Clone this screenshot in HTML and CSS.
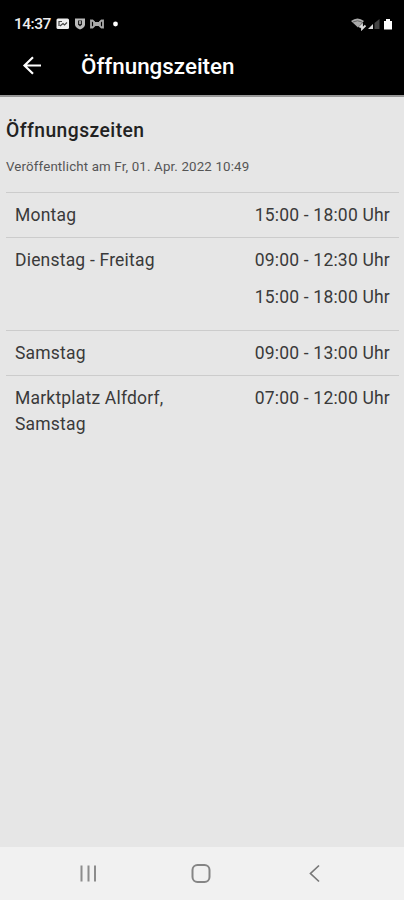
FILE: index.html
```html
<!DOCTYPE html>
<html lang="de">
<head>
    <meta charset="UTF-8">
    <meta name="viewport" content="width=device-width, initial-scale=1.0">
    <title>Öffnungszeiten</title>
    <link rel="stylesheet" href="styles.css">
</head>
<body>

<header>
    <div class="status-bar">
        <span class="clock">14:37</span>
        <svg class="notifications" width="64" height="14" viewBox="0 0 64 14">
            <rect x="1.5" y="1.5" width="12.5" height="10.5" rx="1.5" fill="#eee"/>
            <path d="M4 9V4.500h3M5 9l3-2.500 1.500 1.500 2.500-2.500" fill="none" stroke="#444" stroke-width="1.2"/>
            <path d="M20 1.5h10v6q0 3-5 5-5-2-5-5z" fill="#bbb"/>
            <path d="M23 3.5h4v4l-2 2-2-2z" fill="#222"/>
            <path d="M25 4v3" stroke="#eee" stroke-width="1.2"/>
            <path d="M36 2.5v9M48 2.5v9M37 3l3 3h4l3-3M37 11l3-3h4l3 3M39 4v6M45 4v6" fill="none" stroke="#aaa" stroke-width="1.8"/>
            <circle cx="60.5" cy="7" r="2.4" fill="#fff"/>
        </svg>
        <svg class="signals" width="44" height="14" viewBox="0 0 44 14">
            <path d="M1 4Q7.5-1 14 4L8 10.5z" fill="#aaa"/>
            <path d="M3 5Q7.5 2.5 12 5" fill="none" stroke="#666"/>
            <path d="M9.5 10.5l2.5-2.5v4l3.5-3.5" fill="none" stroke="#ddd" stroke-width="1.8"/>
            <path d="M18 12l5-5v5z" fill="#ddd"/>
            <path d="M24.5 12V6l5-4v10z" fill="#444"/>
            <path d="M34 4h2V2h4v2h2v8.5h-8z" fill="#fff"/>
        </svg>
    </div>
    <div class="toolbar">
        <svg class="back" width="20" height="20" viewBox="0 0 20 20">
            <path d="M19 9.5H2.5M11 1.3L2.5 9.5l8.5 8.2" fill="none" stroke="#fff" stroke-width="2.2"/>
        </svg>
        <h1>Öffnungszeiten</h1>
    </div>
</header>

<main>
    <h2>Öffnungszeiten</h2>
    <p class="published">Veröffentlicht am Fr, 01. Apr. 2022 10:49</p>

    <div class="hours">
        <div class="row">
            <div class="day">Montag</div>
            <div class="times"><p>15:00 - 18:00 Uhr</p></div>
        </div>
        <div class="row split">
            <div class="day">Dienstag - Freitag</div>
            <div class="times">
                <p>09:00 - 12:30 Uhr</p>
                <p>15:00 - 18:00 Uhr</p>
            </div>
        </div>
        <div class="row">
            <div class="day">Samstag</div>
            <div class="times"><p>09:00 - 13:00 Uhr</p></div>
        </div>
        <div class="row">
            <div class="day">Marktplatz Alfdorf, Samstag</div>
            <div class="times"><p>07:00 - 12:00 Uhr</p></div>
        </div>
    </div>
</main>

<nav>
    <svg width="20" height="20" viewBox="0 0 20 20">
        <path d="M3.5 1.5v16M10.5 1.5v16M17 1.5v16" stroke="#8c8c8c" stroke-width="2"/>
    </svg>
    <svg width="20" height="20" viewBox="0 0 20 20">
        <rect x="1.5" y="1" width="17" height="17" rx="5" fill="none" stroke="#858585" stroke-width="2"/>
    </svg>
    <svg width="20" height="20" viewBox="0 0 20 20">
        <path d="M15 1.5L6.5 9.5l8.5 8" fill="none" stroke="#777" stroke-width="1.7"/>
    </svg>
</nav>

</body>
</html>
```
FILE: styles.css
```css
body {
    margin: 0;
    height: 900px;
    display: flex;
    flex-direction: column;
    font-family: Roboto, "Liberation Sans", sans-serif;
    background-color: #e6e6e6;
    color: #3a3a3a;
    overflow: hidden;
}
header {
    height: 97px;
    box-sizing: border-box;
    background-color: #000;
    border-bottom: 2px solid #969696;
    color: #fff;
}
.status-bar {
    display: flex;
    align-items: center;
    height: 47px;
    padding: 0 10px 0 14px;
    box-sizing: border-box;
}
.clock {
    width: 41px;
    font-size: 15.5px;
    font-weight: 500;
    letter-spacing: -0.5px;
    color: #eee;
}
.signals {
    margin-left: auto;
}
.toolbar {
    display: flex;
    align-items: center;
    height: 38px;
    padding-left: 22px;
}
.toolbar h1 {
    margin: 0 0 0 39px;
    font-size: 22.4px;
    font-weight: 500;
    line-height: 38px;
}
main {
    flex: 1;
    padding: 20px 5px 0 6px;
}
h2 {
    margin: 0;
    font-size: 19.3px;
    line-height: 27px;
    font-weight: 500;
    letter-spacing: 0.45px;
    color: #222;
}
.published {
    margin: 12px 0 0;
    font-size: 13.3px;
    line-height: 21px;
    letter-spacing: 0.15px;
    color: #555;
}
.hours {
    margin-top: 15px;
    font-size: 17.5px;
    line-height: 26px;
}
.row {
    display: flex;
    justify-content: space-between;
    box-sizing: border-box;
    min-height: 45px;
    padding: 9px 9px 0;
    border-top: 1px solid #ccc;
}
.split {
    height: 93px;
}
.day {
    width: 180px;
    letter-spacing: 0.2px;
}
.times {
    letter-spacing: 0.2px;
}
.times p {
    margin: 0;
}
.times p + p {
    margin-top: 11px;
}
nav {
    display: flex;
    justify-content: space-between;
    align-items: center;
    height: 53px;
    padding: 0 80px 0 78px;
    background-color: #f1f1f1;
}
```
